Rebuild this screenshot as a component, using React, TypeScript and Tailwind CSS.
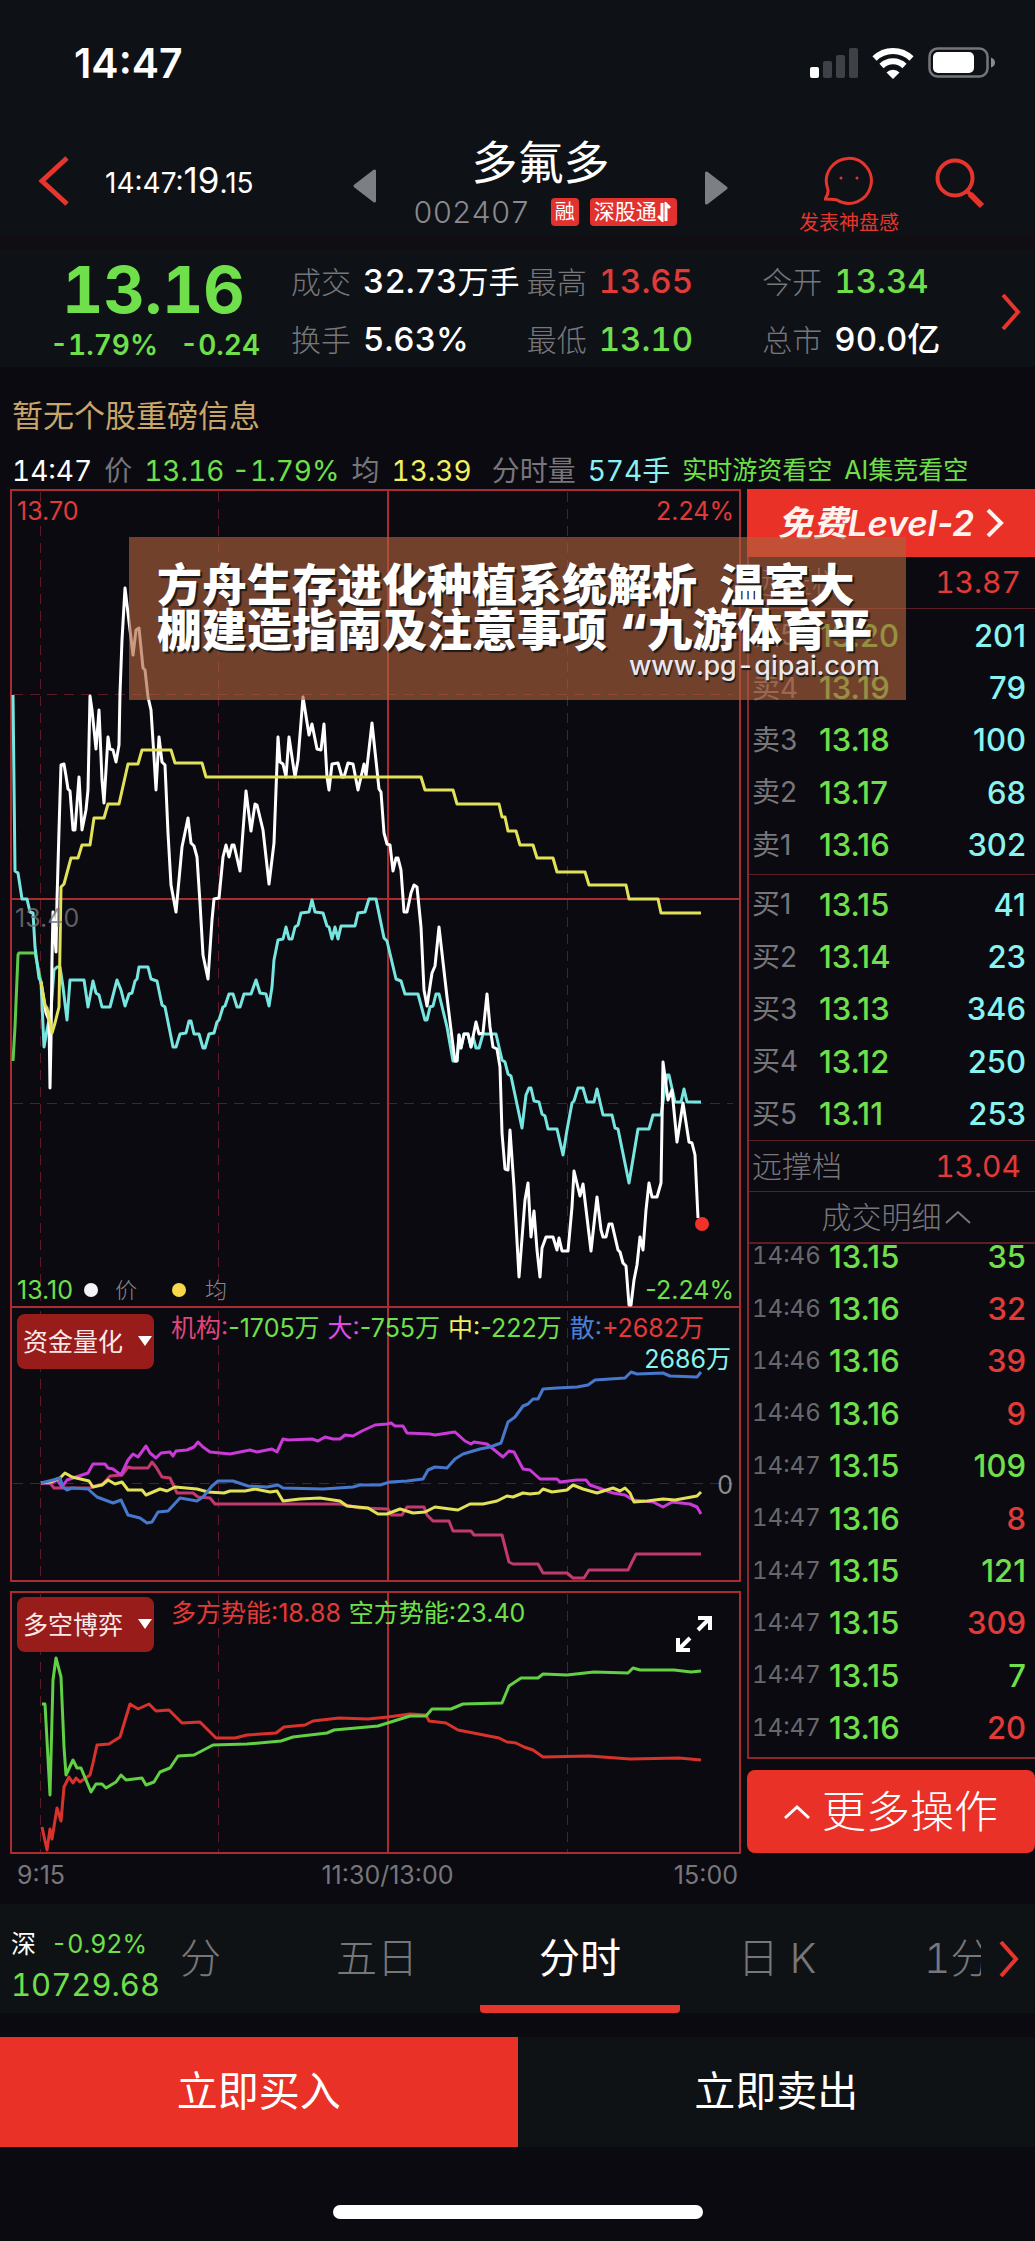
import type React from "react";

type Line = { color: string; width: number; points: string };

const GREEN = "text-[#6fe04b]";
const RED = "text-[#e23a38]";

// All plots share one coordinate space, so a minute has the same x in each panel.
const priceLines: Line[] = [
  {
    color: "#5fc94a",
    width: 3,
    points: "13,1061 15,1027 18,955 19,953 35,953 41,982",
  },
  {
    color: "#78e6e0",
    width: 3,
    points:
      "13,695 15,871 18,873 22,899 27,899 30,912 33,913 35,947 39,978 41,982 44,1047 47,1030 51,1010 54,970 57,967 60,967 63,987 67,1020 70,980 84,980 88,1007 93,981 96,993 99,995 102,1007 110,1007 117,980 121,990 125,1006 129,994 132,993 135,981 137,979 139,967 148,967 151,979 157,981 162,1005 165,1007 173,1047 176,1047 180,1034 186,1033 189,1021 191,1021 194,1034 199,1034 203,1048 205,1048 209,1034 214,1033 217,1022 219,1020 223,1007 225,1006 229,994 233,994 237,1007 240,1007 244,994 251,994 256,980 260,993 266,994 269,1006 272,987 274,960 278,940 283,939 286,927 289,939 292,939 295,927 298,925 301,913 309,912 312,900 315,912 323,913 327,926 329,927 332,939 335,927 338,939 341,926 355,926 358,913 365,912 369,899 376,899 384,938 387,941 396,979 401,981 405,994 418,994 425,1020 427,1020 430,1007 433,1006 436,994 439,994 447,1027 453,1061 457,1061 459,1035 461,1048 464,1034 468,1034 471,1047 473,1037 476,1048 479,1048 483,1034 496,1034 502,1060 505,1062 508,1074 511,1076 522,1128 526,1095 529,1088 531,1088 534,1101 539,1102 542,1114 545,1116 548,1129 557,1129 563,1155 567,1130 572,1103 574,1101 578,1088 583,1088 587,1102 594,1102 597,1089 603,1115 612,1115 615,1128 618,1129 629,1183 638,1129 649,1129 653,1115 661,1115 667,1075 669,1075 675,1102 681,1102 684,1089 687,1102 701,1102",
  },
  {
    color: "#ffffff",
    width: 3,
    points:
      "41,982 46,1013 49,1020 50,1088 51,1040 52,960 53,912 56,952 57,900 59,830 61,765 64,764 66,776 68,789 70,791 73,830 75,830 79,777 82,830 86,810 88,790 90,696 92,710 96,749 99,710 102,780 104,803 108,737 110,749 113,750 116,762 119,745 120,693 122,640 125,588 133,655 136,630 139,628 143,668 145,670 148,697 151,710 154,757 156,790 159,737 162,762 165,765 168,833 171,885 176,912 182,847 188,818 191,843 194,846 197,857 200,903 203,955 208,979 212,920 214,899 219,898 223,857 226,845 229,857 232,845 234,845 240,871 246,791 251,831 255,804 257,805 263,830 269,884 274,843 278,737 280,762 283,764 286,777 289,737 295,777 298,760 303,697 309,735 312,724 317,749 321,750 324,724 327,777 329,790 332,764 338,763 342,777 344,777 348,763 353,764 358,790 364,764 366,776 372,723 379,789 381,792 384,833 387,844 390,845 393,871 396,858 398,858 401,870 404,912 407,912 411,893 414,885 417,887 421,927 424,990 427,1006 432,973 435,966 439,927 447,997 452,1038 455,1061 457,1061 459,1035 461,1048 464,1034 468,1034 471,1047 476,1022 479,1034 483,1033 487,994 490,1027 493,1047 497,1049 500,1067 502,1133 505,1169 508,1170 510,1130 514,1187 519,1277 525,1200 528,1183 531,1237 534,1211 537,1250 540,1277 542,1248 546,1237 553,1237 557,1250 559,1238 562,1251 568,1251 572,1207 574,1171 580,1196 583,1184 591,1251 597,1197 601,1230 603,1237 606,1237 609,1224 612,1224 618,1250 620,1252 623,1263 626,1266 629,1305 631,1305 634,1280 637,1265 640,1237 643,1250 646,1210 649,1183 652,1197 657,1197 661,1183 663,1062 668,1100 672,1090 677,1142 683,1103 689,1142 692,1143 695,1155 698,1218",
  },
  {
    color: "#e2e25a",
    width: 3,
    points:
      "41,982 45,1005 47,1008 52,1033 55,1023 59,1007 61,887 64,884 71,858 78,858 82,845 90,845 94,818 104,818 108,804 119,804 128,764 138,764 142,750 171,750 175,763 202,763 206,777 421,777 425,790 453,790 457,804 499,804 502,817 505,817 508,831 516,831 520,845 533,845 537,858 553,858 557,872 585,872 589,885 626,885 629,899 658,899 661,913 701,913",
  },
];

const fundLines: Line[] = [
  {
    color: "#c23a6d",
    width: 3,
    points:
      "41,1483 50,1483 54,1488 90,1488 95,1486 103,1484 110,1476 122,1475 128,1467 132,1468 148,1468 152,1462 156,1467 162,1477 170,1478 177,1493 193,1493 198,1497 210,1498 215,1504 340,1504 360,1508 388,1509 391,1515 402,1515 407,1507 424,1507 427,1515 433,1521 449,1521 453,1531 471,1531 474,1535 502,1535 509,1562 513,1564 538,1564 543,1573 567,1573 573,1578 584,1578 589,1570 628,1570 636,1554 701,1554",
  },
  {
    color: "#c93ad6",
    width: 3,
    points:
      "41,1483 52,1483 57,1480 62,1487 67,1480 88,1473 93,1464 105,1464 108,1468 113,1469 121,1475 128,1460 133,1454 138,1457 146,1446 150,1453 156,1458 161,1453 170,1452 173,1456 176,1451 187,1450 194,1447 198,1442 203,1447 210,1452 230,1454 250,1450 257,1452 272,1449 277,1452 283,1439 288,1440 312,1439 318,1441 325,1437 333,1439 340,1439 345,1435 353,1436 362,1431 375,1425 387,1424 391,1423 395,1426 403,1426 407,1433 430,1434 435,1435 448,1433 455,1432 465,1441 471,1444 474,1442 487,1444 503,1457 509,1451 514,1452 523,1469 530,1470 540,1479 557,1479 560,1482 577,1480 586,1480 590,1485 613,1493 625,1495 633,1500 653,1502 663,1507 672,1502 690,1504 697,1507 701,1514",
  },
  {
    color: "#e2e25a",
    width: 3,
    points:
      "41,1483 50,1482 60,1478 65,1473 72,1477 89,1481 93,1487 102,1485 108,1480 115,1484 122,1482 128,1490 142,1490 146,1495 160,1489 167,1491 175,1487 197,1489 208,1492 224,1493 230,1491 245,1491 255,1489 270,1492 277,1491 283,1501 300,1499 320,1498 340,1501 347,1506 368,1508 378,1514 387,1514 400,1509 413,1513 425,1512 435,1507 450,1509 458,1510 470,1504 483,1504 497,1501 507,1496 513,1497 523,1493 530,1494 539,1493 543,1489 552,1492 567,1490 573,1485 583,1489 597,1493 613,1488 620,1491 625,1488 630,1493 634,1502 647,1501 663,1499 675,1500 697,1496 701,1492",
  },
  {
    color: "#4678cc",
    width: 3,
    points:
      "41,1483 53,1480 60,1478 63,1487 67,1490 72,1488 88,1489 97,1497 113,1503 121,1500 128,1515 140,1518 147,1523 152,1522 158,1512 168,1511 180,1498 197,1501 203,1497 212,1486 218,1481 233,1481 248,1486 267,1487 278,1485 283,1488 323,1489 353,1487 360,1485 380,1485 390,1482 407,1481 423,1479 428,1470 435,1467 447,1468 455,1459 463,1454 480,1449 490,1447 501,1443 508,1422 515,1417 523,1406 528,1404 533,1399 538,1399 543,1389 557,1388 577,1387 588,1385 595,1380 625,1378 631,1372 637,1374 663,1373 670,1376 697,1377 701,1372",
  },
];

const powerLines: Line[] = [
  {
    color: "#d8322c",
    width: 3,
    points:
      "42,1827 47,1850 50,1829 52,1839 57,1808 61,1821 64,1787 69,1777 73,1783 76,1778 80,1782 90,1775 93,1763 97,1745 109,1744 120,1737 130,1704 138,1709 149,1704 156,1711 169,1710 182,1723 200,1722 216,1738 235,1738 247,1735 276,1733 284,1727 305,1725 313,1721 339,1718 368,1719 388,1717 410,1714 426,1715 429,1721 446,1723 458,1730 499,1738 507,1742 516,1743 524,1747 533,1750 543,1757 589,1756 630,1759 679,1758 701,1760",
  },
  {
    color: "#62d044",
    width: 3,
    points:
      "42,1704 45,1704 50,1795 53,1680 56,1658 61,1677 64,1747 66,1775 73,1760 77,1768 81,1768 91,1792 96,1784 102,1784 106,1788 116,1782 121,1775 126,1780 142,1778 146,1785 154,1782 160,1772 170,1768 178,1756 194,1755 213,1745 247,1744 281,1741 293,1737 327,1733 334,1730 378,1726 410,1716 426,1716 432,1709 451,1709 463,1704 502,1703 509,1686 521,1678 538,1678 543,1674 567,1675 594,1672 628,1673 633,1668 640,1670 674,1670 691,1672 701,1671",
  },
];

const sells = [
  ["卖5", "13.20", "201"],
  ["卖4", "13.19", "79"],
  ["卖3", "13.18", "100"],
  ["卖2", "13.17", "68"],
  ["卖1", "13.16", "302"],
];

const buys = [
  ["买1", "13.15", "41"],
  ["买2", "13.14", "23"],
  ["买3", "13.13", "346"],
  ["买4", "13.12", "250"],
  ["买5", "13.11", "253"],
];

const ticks = [
  { time: "14:46", price: "13.15", volume: "35", up: false },
  { time: "14:46", price: "13.16", volume: "32", up: true },
  { time: "14:46", price: "13.16", volume: "39", up: true },
  { time: "14:46", price: "13.16", volume: "9", up: true },
  { time: "14:47", price: "13.15", volume: "109", up: false },
  { time: "14:47", price: "13.16", volume: "8", up: true },
  { time: "14:47", price: "13.15", volume: "121", up: false },
  { time: "14:47", price: "13.15", volume: "309", up: true },
  { time: "14:47", price: "13.15", volume: "7", up: false },
  { time: "14:47", price: "13.16", volume: "20", up: true },
];

const Chevron = ({
  points,
  viewBox,
  className,
  width = 4,
}: {
  points: string;
  viewBox: string;
  className: string;
  width?: number;
}) => (
  <svg
    viewBox={viewBox}
    className={className}
    fill="none"
    stroke="currentColor"
    strokeWidth={width}
    aria-hidden="true"
  >
    <polyline points={points} />
  </svg>
);

const Plot = ({
  top,
  height,
  lines,
  className,
  openTop = false,
  dashedRows = [],
  children,
}: {
  top: number;
  height: number;
  lines: Line[];
  className: string;
  openTop?: boolean;
  dashedRows?: number[];
  children?: React.ReactNode;
}) => {
  const bottom = top + height;
  return (
    <svg
      viewBox={`10 ${top} 731 ${height}`}
      preserveAspectRatio="none"
      className={className}
      fill="none"
      aria-hidden="true"
    >
      <g stroke="#5c1a26" strokeWidth="1" strokeDasharray="10 7">
        {[40, 218, 567].map((x) => (
          <path key={x} d={`M${x}.5 ${top + 3}V${bottom}`} />
        ))}
        {dashedRows.map((y) => (
          <path key={y} d={`M13 ${y}.5H733`} />
        ))}
      </g>
      <g stroke="#a82c30" strokeWidth="2">
        <path d={`M11 ${top}V${bottom}M740 ${top}V${bottom}`} />
        <path d={`M10 ${bottom - 1}H741`} />
        {!openTop && <path d={`M10 ${top + 1}H741`} />}
        <path d={`M388 ${top}V${bottom}`} />
      </g>
      {children}
      {lines.map((line) => (
        <polyline
          key={line.color}
          points={line.points}
          stroke={line.color}
          strokeWidth={line.width}
          strokeLinejoin="round"
        />
      ))}
    </svg>
  );
};

const Stat = ({
  label,
  value,
  unit,
  color = "text-white",
}: {
  label: string;
  value: string;
  unit?: string;
  color?: string;
}) => (
  <div className="flex items-center h-[58px] whitespace-nowrap">
    <dt className="w-[72px] text-[30px] font-light text-[#77777b]">{label}</dt>
    <dd className={`text-[33px] font-medium ${color}`}>
      {value}
      {unit && <span className="text-[31px] font-normal">{unit}</span>}
    </dd>
  </div>
);

const IndicatorSelect = ({
  label,
  options,
}: {
  label: string;
  options: string[];
}) => (
  <label className="absolute left-[7px] top-[6px] block w-[137px] h-[55px]">
    <span className="sr-only">{label}</span>
    <select className="appearance-none w-full h-full rounded-lg bg-[#981c1a] pl-[6px] text-[25px] leading-[40px] text-[#fbe9e9]">
      {options.map((o) => (
        <option key={o}>{o}</option>
      ))}
    </select>
    <svg
      viewBox="0 0 14 10"
      className="pointer-events-none absolute right-[2px] top-[22px] w-[14px] h-[10px]"
      aria-hidden="true"
    >
      <path d="M0 0H14L7 10Z" fill="#fff" />
    </svg>
  </label>
);

const OrderTable = ({ rows, name }: { rows: string[][]; name: string }) => (
  <table
    className="w-full h-[262px] text-[31px] leading-none proportional-nums"
    aria-label={name}
  >
    <tbody>
      {rows.map(([label, price, volume]) => (
        <tr key={label}>
          <th
            scope="row"
            className="w-[70px] pl-[3px] text-left text-[28px] font-normal text-[#77777b]"
          >
            {label}
          </th>
          <td className={`font-medium ${GREEN}`}>{price}</td>
          <td className="pr-[9px] text-right font-medium text-[#8af3f0]">
            {volume}
          </td>
        </tr>
      ))}
    </tbody>
  </table>
);

const StatusBar = () => (
  <div className="flex justify-between h-[120px] pl-[74px] pr-[39px] pt-[38px]">
    <span className="proportional-nums text-[41px] leading-[50px] font-semibold">
      14:47
    </span>
    <div className="flex gap-[14px] pt-[9px]">
      <svg viewBox="0 0 48 32" className="w-[48px] h-[32px]" aria-hidden="true">
        <rect x="0" y="20" width="9" height="11" rx="2" fill="#fff" />
        <rect x="13" y="14" width="9" height="17" rx="2" fill="#3e4146" />
        <rect x="26" y="8" width="9" height="23" rx="2" fill="#3e4146" />
        <rect x="39" y="1" width="9" height="30" rx="2" fill="#3e4146" />
      </svg>
      <svg viewBox="0 0 42 32" className="w-[42px] h-[32px]" aria-hidden="true">
        <g fill="none" stroke="#fff" strokeWidth="6">
          <path d="M2.5 11.5A26.5 26.5 0 0 1 39.5 11.5" />
          <path d="M9.5 19A16.5 16.5 0 0 1 32.5 19" />
        </g>
        <path d="M21 32L14.5 25.5A9 9 0 0 1 27.5 25.5Z" fill="#fff" />
      </svg>
      <svg viewBox="0 0 68 32" className="w-[68px] h-[32px]" aria-hidden="true">
        <rect
          x="1.5"
          y="1.5"
          width="58"
          height="28"
          rx="8"
          fill="none"
          stroke="#75767a"
          strokeWidth="2.5"
        />
        <rect x="5" y="5" width="41" height="21" rx="5" fill="#fff" />
        <path d="M63 10.5Q67 12 67 15.5T63 20.5Z" fill="#8a8b8e" />
      </svg>
    </div>
  </div>
);

const Header = () => (
  <header className="flex h-[115px]">
    <div className="flex items-center w-[353px] pl-[38px] pt-[6px]">
      <button aria-label="返回" className="w-[67px] text-[#e6352c]">
        <Chevron
          viewBox="0 0 32 50"
          points="29,2 4,25 29,48"
          className="w-[32px] h-[50px]"
          width={5}
        />
      </button>
      <span className="proportional-nums text-[28px]">
        14:47:<span className="text-[35px]">19</span>.15
      </span>
    </div>
    <div className="flex flex-1 justify-between">
      <button aria-label="上一只" className="pt-[16px]">
        <svg viewBox="0 0 24 34" className="w-[24px] h-[34px]" aria-hidden="true">
          <path
            d="M2 17L21.5 2V32Z"
            fill="#7c7f83"
            stroke="#7c7f83"
            strokeWidth="3"
            strokeLinejoin="round"
          />
        </svg>
      </button>
      <div className="flex flex-col items-center pt-[14px]">
        <h1 className="text-[46px] leading-[56px]">多氟多</h1>
        <div className="flex items-center gap-[11px] h-[44px] pl-[9px]">
          <span className="text-[30px] font-light text-[#8a8b8f] pr-[10px]">
            002407
          </span>
          <span className="rounded bg-[#e23230] px-[4px] text-[20px] leading-[28px]">
            融
          </span>
          <span className="flex items-center rounded bg-[#e23230] pl-[4px] pr-[6px] text-[21px] leading-[28px]">
            深股通
            <svg
              viewBox="0 0 14 20"
              className="w-[14px] h-[20px]"
              fill="none"
              stroke="#fff"
              strokeWidth="3"
              aria-hidden="true"
            >
              <path d="M5 1V18L1 14M9 19V2L13 6" />
            </svg>
          </span>
        </div>
      </div>
      <button aria-label="下一只" className="pt-[20px]">
        <svg viewBox="0 0 24 34" className="w-[24px] h-[34px]" aria-hidden="true">
          <path
            d="M22 17L2.5 2V32Z"
            fill="#7c7f83"
            stroke="#7c7f83"
            strokeWidth="3"
            strokeLinejoin="round"
          />
        </svg>
      </button>
    </div>
    <div className="flex items-start gap-[36px] w-[307px] pl-[71px] text-[#e6352c]">
      <button className="flex flex-col items-center pt-[36px] whitespace-nowrap">
        <svg
          viewBox="0 0 50 50"
          className="w-[50px] h-[50px]"
          fill="none"
          stroke="currentColor"
          strokeWidth="3"
          aria-hidden="true"
        >
          <path
            d="M3.5 32A22.5 22.5 0 1 1 13 44C9 42.5 5 43.5 1 43C3 40 5.5 37 3.5 32Z"
            strokeLinejoin="round"
          />
          <circle cx="17" cy="22" r="1.5" fill="currentColor" stroke="none" />
          <circle cx="33" cy="22" r="1.5" fill="currentColor" stroke="none" />
        </svg>
        <span className="text-[20px] leading-[34px]">发表神盘感</span>
      </button>
      <button aria-label="搜索" className="pt-[38px]">
        <svg
          viewBox="0 0 50 52"
          className="w-[50px] h-[52px]"
          fill="none"
          stroke="currentColor"
          aria-hidden="true"
        >
          <circle cx="20" cy="20" r="17.5" strokeWidth="4" />
          <path d="M32 33L36 37" strokeWidth="4" />
          <path d="M35 36L47 48" strokeWidth="6" />
        </svg>
      </button>
    </div>
  </header>
);

const Quote = () => (
  <section className="flex h-[117px] bg-[#0e1116]">
    <div className="w-[291px] pl-[50px]">
      <p className={`pl-[12px] text-[64px] leading-[80px] font-bold ${GREEN}`}>
        13.16
      </p>
      <p
        className={`flex gap-[22px] text-[28px] leading-[30px] font-semibold ${GREEN}`}
      >
        <span>-1.79%</span>
        <span>-0.24</span>
      </p>
    </div>
    <dl className="grid flex-1 grid-cols-3 content-start pt-[3px]">
      <Stat label="成交" value="32.73" unit="万手" />
      <Stat label="最高" value="13.65" color={RED} />
      <Stat label="今开" value="13.34" color={GREEN} />
      <Stat label="换手" value="5.63%" />
      <Stat label="最低" value="13.10" color={GREEN} />
      <Stat label="总市" value="90.0亿" />
    </dl>
    <button aria-label="更多行情" className="w-[37px] pt-[6px] pl-[3px] text-[#e6352c]">
      <Chevron
        viewBox="0 0 20 36"
        points="2,1 17,18 2,35"
        className="w-[20px] h-[36px]"
      />
    </button>
  </section>
);

const Charts = () => (
  <div className="flex-1 min-w-0 text-[25px] leading-[30px] proportional-nums">
    <div className="relative">
      <Plot
        top={489}
        height={819}
        lines={priceLines}
        className="block w-full h-[819px]"
        dashedRows={[694, 1103]}
      >
        <path d="M11 899H740" stroke="#a82c30" strokeWidth="2" />
      </Plot>
      <svg
        viewBox="0 0 24 24"
        className="absolute right-[27px] top-[723px] w-[24px] h-[24px]"
        aria-hidden="true"
      >
        <circle cx="12" cy="12" r="7" fill="#f0322b" />
      </svg>
      <span className={`absolute left-[7px] top-[7px] ${RED}`}>13.70</span>
      <span className={`absolute right-[7px] top-[7px] ${RED}`}>2.24%</span>
      <span className="absolute left-[5px] top-[414px] text-[#77777b]/80">
        13.40
      </span>
      <div className="absolute inset-x-[7px] bottom-[3px] flex items-center">
        <span className={GREEN}>13.10</span>
        <i className="ml-[11px] size-[14px] rounded-full bg-[#f4f4f8]" />
        <span className="ml-[17px] text-[22px] font-light text-[#88888c]">价</span>
        <i className="ml-[35px] size-[14px] rounded-full bg-[#f8d84a]" />
        <span className="ml-[19px] text-[22px] font-light text-[#88888c]">均</span>
        <span className={`ml-auto ${GREEN}`}>-2.24%</span>
      </div>
    </div>

    <div className="relative">
      <Plot
        top={1308}
        height={274}
        lines={fundLines}
        className="block w-full h-[274px]"
        openTop
        dashedRows={[1483]}
      />
      <IndicatorSelect label="资金指标" options={["资金量化"]} />
      <p
        className={`absolute left-[161px] top-[5px] flex gap-[8px] whitespace-nowrap ${GREEN}`}
      >
        <span>
          <span className="text-[#e0457c]">机构:</span>-1705万
        </span>
        <span>
          <span className="text-[#e04ae6]">大:</span>-755万
        </span>
        <span>
          <span className="text-[#f0f060]">中:</span>-222万
        </span>
        <span>
          <span className="text-[#4a80dc]">散:</span>
          <span className={RED}>+2682万</span>
        </span>
      </p>
      <span className="absolute right-[10px] top-[36px] text-[#8af3f0]">
        2686万
      </span>
      <span className="absolute right-[8px] top-[162px] text-[#8c8c90]">0</span>
    </div>

    <div className="relative mt-[9px]">
      <Plot
        top={1591}
        height={263}
        lines={powerLines}
        className="block w-full h-[263px]"
      />
      <IndicatorSelect label="多空指标" options={["多空博弈"]} />
      <p className="absolute left-[161px] top-[7px] flex gap-[8px] whitespace-nowrap">
        <span className={RED}>多方势能:18.88</span>
        <span className={GREEN}>空方势能:23.40</span>
      </p>
      <button aria-label="全屏" className="absolute right-[28px] top-[24px]">
        <svg
          viewBox="0 0 38 38"
          className="w-[38px] h-[38px]"
          fill="none"
          stroke="#fff"
          strokeWidth="4"
          aria-hidden="true"
        >
          <path d="M23 3H35V15M35 3L23 15M3 23V35H15M3 35L15 23" />
        </svg>
      </button>
    </div>

    <div className="grid grid-cols-3 pl-[7px] pr-[3px] pt-[6px] text-[#77777b]">
      <span>9:15</span>
      <span className="pl-[20px] text-center">11:30/13:00</span>
      <span className="text-right">15:00</span>
    </div>
  </div>
);

const OrderBook = () => (
  <aside className="w-[288px] text-[30px]">
    <a
      href="#level2"
      className="flex items-center justify-center gap-[12px] h-[68px] bg-[#e93128] text-[35px] font-semibold text-[#fff3f0] whitespace-nowrap proportional-nums"
    >
      <span className="italic">免费Level-2</span>
      <Chevron
        viewBox="0 0 18 28"
        points="2,1 15,14 2,27"
        className="w-[18px] h-[28px]"
      />
    </a>
    <div className="border-l-2 border-b-2 border-[#8a2630]">
      <div className="flex items-center justify-between h-[52px] pl-[3px] pr-[14px] border-b border-[#5c1e26]">
        <span className="font-light text-[#77777b]">远压档</span>
        <span className={RED}>13.87</span>
      </div>
      <div className="pb-[3px] border-b border-[#5c1e26]">
        <OrderTable rows={sells} name="卖盘" />
      </div>
      <div className="pt-[3px] border-b border-[#5c1e26]">
        <OrderTable rows={buys} name="买盘" />
      </div>
      <div className="flex items-center justify-between h-[51px] pl-[3px] pr-[14px] border-b border-[#5c1e26]">
        <span className="font-light text-[#77777b]">远撑档</span>
        <span className={RED}>13.04</span>
      </div>
      <button className="flex items-center justify-center gap-[3px] w-full h-[52px] pl-[8px] border-b-2 border-[#5c1e26] font-light text-[#77777b]">
        成交明细
        <Chevron
          viewBox="0 0 26 16"
          points="1,14 13,3 25,14"
          className="w-[26px] h-[16px]"
          width={2}
        />
      </button>
      <div className="h-[513px] overflow-hidden">
        <table
          className="-mt-[14px] w-full h-[524px] text-[31px] leading-none"
          aria-label="成交明细"
        >
          <tbody>
            {ticks.map((tick, i) => (
              <tr key={i}>
                <td className="w-[80px] pl-[3px] text-[24px] text-[#68686c]">
                  {tick.time}
                </td>
                <td className={`font-medium proportional-nums ${GREEN}`}>
                  {tick.price}
                </td>
                <td
                  className={`pr-[9px] text-right font-medium proportional-nums ${tick.up ? RED : GREEN}`}
                >
                  {tick.volume}
                </td>
              </tr>
            ))}
          </tbody>
        </table>
      </div>
    </div>
    <button className="flex items-center justify-center gap-[12px] mt-[11px] w-full h-[83px] rounded-lg bg-[#e93128] text-[44px] font-light">
      <Chevron
        viewBox="0 0 26 16"
        points="1,14 13,3 25,14"
        className="w-[26px] h-[16px]"
        width={3}
      />
      更多操作
    </button>
  </aside>
);

const Promo = () => (
  <div className="absolute left-[129px] top-[537px] w-[777px] h-[163px] bg-[#ae613d]/64 pl-[28px] pr-[26px] pt-[26px]">
    <p className="text-[45px] leading-[45px] font-black whitespace-nowrap [text-shadow:2px_2px_1px_#1a1a1a]">
      方舟生存进化种植系统解析&ensp;温室大
      <br />
      棚建造指南及注意事项 “九游体育平
    </p>
    <p className="text-right text-[27px] leading-[26px] font-medium text-[#e8e8ee] [text-shadow:1px_2px_1px_#1a1a1a]">
      www.pg-qipai.com
    </p>
  </div>
);

const Tabs = () => (
  <nav className="flex h-[109px] bg-[#0f1215]">
    <div className={`w-[168px] pl-[11px] pt-[20px] whitespace-nowrap ${GREEN}`}>
      <p className="flex gap-[15px] text-[25px] leading-[40px]">
        <span className="text-white">深</span>
        <span>-0.92%</span>
      </p>
      <p className="text-[31px] leading-[42px]">10729.68</p>
    </div>
    <div className="flex flex-1 min-w-0 overflow-hidden text-[41px] font-light text-[#77777b] whitespace-nowrap">
      <button className="w-[112px] shrink-0 pl-[12px] text-left">分</button>
      <button className="w-[200px] shrink-0 pr-[6px]">五日</button>
      <button className="w-[200px] shrink-0 border-y-8 border-t-transparent border-b-[#e6352c] rounded-sm font-normal text-white">
        分时
      </button>
      <button className="w-[200px] shrink-0 pr-[6px]">日 K</button>
      <button className="w-[200px] shrink-0 pl-[44px] text-left">1分</button>
    </div>
    <button aria-label="更多周期" className="w-[54px] pl-[18px] text-[#e6352c]">
      <Chevron
        viewBox="0 0 20 36"
        points="2,1 17,18 2,35"
        className="w-[20px] h-[36px]"
      />
    </button>
  </nav>
);

export default function App() {
  return (
    <div className="relative min-h-screen bg-[#0b0a10] text-white tabular-nums font-[family-name:Inter,'Noto_Sans_CJK_SC',sans-serif]">
      <div className="bg-[#0e1116]">
        <StatusBar />
        <Header />
      </div>
      <div className="h-[15px] bg-[#100e13]" />
      <Quote />

      <p className="h-[86px] pt-[24px] pl-[12px] text-[31px] leading-[50px] text-[#c9a66a]">
        暂无个股重磅信息
      </p>
      <div
        className={`flex items-center gap-[12px] h-[36px] pl-[12px] text-[28px] whitespace-nowrap ${GREEN}`}
      >
        <span className="text-white">14:47</span>
        <span className="text-[#77777b]">价</span>
        <span>13.16 -1.79%</span>
        <span className="text-[#77777b]">均</span>
        <span className="text-[#f0f060]">13.39</span>
        <span className="pl-[8px] text-[#77777b]">分时量</span>
        <span className="text-[#8af3f0]">574手</span>
        <span className="text-[25px]">实时游资看空</span>
        <span className="text-[25px] proportional-nums">AI集竞看空</span>
      </div>

      <main className="flex gap-[6px] h-[1415px] pl-[10px]">
        <Charts />
        <OrderBook />
      </main>

      <Tabs />
      <div className="flex pt-[24px] h-[134px] text-[41px]">
        <button className="flex-1 bg-[#e93128]">立即买入</button>
        <button className="flex-1 bg-[#0e1215]">立即卖出</button>
      </div>
      <div className="mx-auto mt-[58px] w-[370px] h-[14px] rounded-full bg-white" />

      <Promo />
    </div>
  );
}
